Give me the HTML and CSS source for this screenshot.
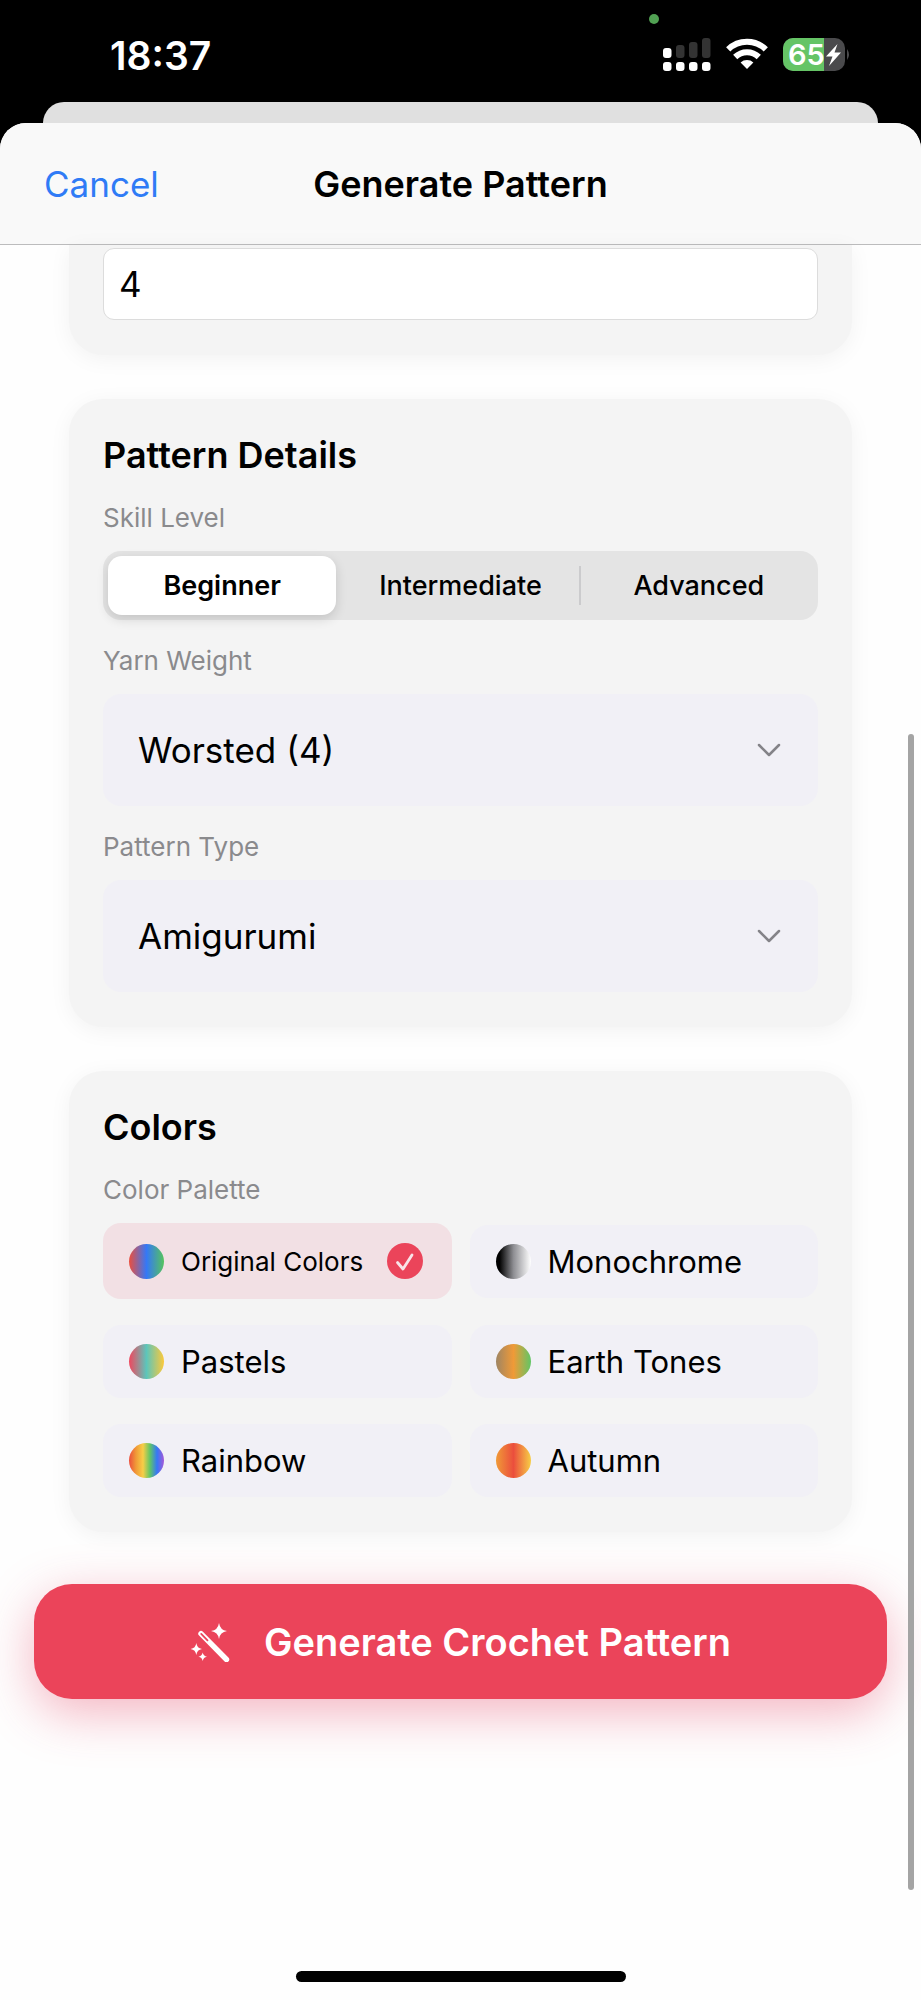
FILE: index.html
```html
<!DOCTYPE html>
<html lang="en">

<head>
    <meta charset="UTF-8" />
    <meta name="viewport" content="width=device-width, initial-scale=1.0" />
    <title>Generate Pattern</title>
    <link rel="stylesheet" href="styles.css">
</head>

<body>
    <div class="status-bar">
        <span class="camera-dot"></span>
        <span class="time">18:37</span>
        <div class="status-icons">
            <svg width="48" height="34" viewBox="0 0 48 34" fill="#fff">
                <rect x="0" y="11" width="8.5" height="10" rx="3" />
                <rect x="13" y="8" width="8.5" height="13" rx="3" fill="#333" />
                <rect x="26" y="5" width="8.5" height="16" rx="3" fill="#333" />
                <rect x="39" y="1" width="8.5" height="20" rx="3" fill="#333" />
                <rect x="0" y="25" width="8.5" height="9" rx="3" />
                <rect x="13" y="25" width="8.5" height="9" rx="3" />
                <rect x="26" y="25" width="8.5" height="9" rx="3" />
                <rect x="39" y="25" width="8.5" height="9" rx="3" />
            </svg>
            <svg width="42" height="34" viewBox="0 0 42 34" fill="none" stroke="#fff" stroke-width="6">
                <path d="M2.2 12.4 A27 27 0 0 1 39.8 12.4" />
                <path d="M9.2 20 A17 17 0 0 1 32.8 20" />
                <path d="M21 32 L14.6 25.5 A9.5 9.5 0 0 1 27.4 25.5 Z" fill="#fff" stroke="none" />
            </svg>
            <svg width="68" height="34" viewBox="0 0 68 34">
                <clipPath id="battery"><rect x="0" y="1" width="62" height="33" rx="10" /></clipPath>
                <g clip-path="url(#battery)">
                    <rect x="0" y="1" width="62" height="33" fill="#4a4a4c" />
                    <rect x="0" y="1" width="41" height="33" fill="#65c466" />
                </g>
                <path d="M64 12 Q68 17.5 64 23 Z" fill="#4a4a4c" />
                <text class="battery-level" x="5" y="28">65</text>
                <path d="M54.5 7 L43 19.5 H49.500 L46 29 L58 15.500 H51.500 Z" fill="#fff" />
            </svg>
        </div>
    </div>

    <div class="back-sheet"></div>

    <div class="sheet">
        <header class="nav">
            <button type="button" class="cancel">Cancel</button>
            <h1>Generate Pattern</h1>
        </header>

        <form class="content">
            <section class="card card-cut">
                <input type="text" class="field" aria-label="Value" value="4">
            </section>

            <section class="card">
                <h2>Pattern Details</h2>

                <p class="label" id="skill-label">Skill Level</p>
                <div class="segmented" role="radiogroup" aria-labelledby="skill-label">
                    <label class="segment"><input type="radio" name="skill" checked><span>Beginner</span></label>
                    <label class="segment"><input type="radio" name="skill"><span>Intermediate</span></label>
                    <label class="segment divided"><input type="radio" name="skill"><span>Advanced</span></label>
                </div>

                <label class="label" for="yarn">Yarn Weight</label>
                <div class="picker">
                    <select id="yarn">
                        <option>Worsted (4)</option>
                    </select>
                    <svg class="chevron" width="24" height="14" viewBox="0 0 24 14">
                        <path d="M2 2 L12 12 L22 2" />
                    </svg>
                </div>

                <label class="label" for="type">Pattern Type</label>
                <div class="picker">
                    <select id="type">
                        <option>Amigurumi</option>
                    </select>
                    <svg class="chevron" width="24" height="14" viewBox="0 0 24 14">
                        <path d="M2 2 L12 12 L22 2" />
                    </svg>
                </div>
            </section>

            <section class="card">
                <h2>Colors</h2>

                <p class="label" id="palette-label">Color Palette</p>
                <div class="palettes" role="radiogroup" aria-labelledby="palette-label">
                    <label class="palette selected">
                        <input type="radio" name="palette" checked>
                        <span class="swatch original"></span>
                        <span class="palette-name">Original Colors</span>
                        <svg class="check" width="36" height="36" viewBox="0 0 36 36">
                            <circle cx="18" cy="18" r="18" fill="#eb445a" />
                            <path d="M10.5 19.5 L16 26 L25 12" fill="none" stroke="#f9e4e8" stroke-width="2.8"
                                stroke-linecap="round" stroke-linejoin="round" />
                        </svg>
                    </label>
                    <label class="palette">
                        <input type="radio" name="palette">
                        <span class="swatch monochrome"></span>
                        <span class="palette-name">Monochrome</span>
                    </label>
                    <label class="palette">
                        <input type="radio" name="palette">
                        <span class="swatch pastels"></span>
                        <span class="palette-name">Pastels</span>
                    </label>
                    <label class="palette">
                        <input type="radio" name="palette">
                        <span class="swatch earth"></span>
                        <span class="palette-name">Earth Tones</span>
                    </label>
                    <label class="palette">
                        <input type="radio" name="palette">
                        <span class="swatch rainbow"></span>
                        <span class="palette-name">Rainbow</span>
                    </label>
                    <label class="palette">
                        <input type="radio" name="palette">
                        <span class="swatch autumn"></span>
                        <span class="palette-name">Autumn</span>
                    </label>
                </div>
            </section>

            <button type="button" class="generate">
                <svg width="40" height="40" viewBox="0 0 40 40" fill="#fff">
                    <path d="M29 1 Q30 8 37 9 Q30 10 29 17 Q28 10 21 9 Q28 8 29 1 Z" />
                    <path d="M6.3 21 Q7 26.3 12 27 Q7 27.7 6.3 33 Q5.6 27.7 .6 27 Q5.6 26.3 6.3 21 Z" />
                    <path d="M12.7 30.5 Q13.3 34.1 17 34.7 Q13.3 35.3 12.7 39 Q12.1 35.3 8.4 34.7 Q12.1 34.1 12.7 30.5 Z" />
                    <path d="M11 11.7 L36.5 37.5" stroke="#fff" stroke-width="5.4" stroke-linecap="round" />
                    <path d="M11.2 11.9 L17.5 18.3" stroke="#eb445a" stroke-width="1.8" stroke-linecap="round" />
                </svg>
                Generate Crochet Pattern
            </button>
        </form>

        <div class="home-indicator"></div>
    </div>

    <div class="scrollbar"></div>
</body>

</html>
```

FILE: styles.css
```css
* {
    box-sizing: border-box;
}

body {
    margin: 0;
    min-height: 100vh;
    display: flex;
    flex-direction: column;
    background-color: #000;
    color: #000;
    font-family: Inter, "Liberation Sans", sans-serif;
}

button,
input,
select {
    font: inherit;
    color: inherit;
    margin: 0;
}

h1,
h2,
p {
    margin: 0;
}

svg {
    display: block;
    flex: none;
}

/* status bar */

.status-bar {
    position: relative;
    height: 102px;
    padding: 10px 70px 0 110px;
    display: flex;
    justify-content: space-between;
    align-items: center;
}

.camera-dot {
    position: absolute;
    top: 14px;
    right: 262px;
    width: 10px;
    height: 10px;
    border-radius: 50%;
    background-color: #51a153;
}

.time {
    padding-bottom: 2px;
    color: #fff;
    font-size: 39px;
    font-weight: 600;
}

.status-icons {
    display: flex;
    gap: 15px;
    padding-bottom: 4px;
}

.battery-level {
    font-size: 29px;
    font-weight: 600;
    fill: #fff;
}

/* sheets */

.back-sheet {
    height: 21px;
    margin: 0 43px;
    background-color: #e0e0e0;
    border-radius: 22px 22px 0 0;
}

.sheet {
    flex: 1;
    display: flex;
    flex-direction: column;
    background-color: #fefefe;
    border-radius: 26px 26px 0 0;
    overflow: hidden;
}

.nav {
    height: 122px;
    padding: 0 44px;
    display: grid;
    grid-template-columns: 1fr auto 1fr;
    align-items: center;
    background-color: #f9f9f9;
    border-bottom: 1px solid #bcbcbd;
}

.cancel {
    justify-self: start;
    padding: 0;
    border: 0;
    background: none;
    color: #2f7bf6;
    font-size: 35px;
}

h1 {
    font-size: 36px;
    font-weight: 600;
}

.content {
    display: flex;
    flex-direction: column;
    gap: 44px;
    padding: 0 34px;
}

.card {
    margin: 0 35px;
    padding: 34px 34px 35px;
    display: flex;
    flex-direction: column;
    background-color: #f4f4f4;
    border-radius: 34px;
    box-shadow: 0 4px 22px rgba(0, 0, 0, 0.05);
}

/* first card is scrolled under the navigation bar */
.card-cut {
    padding-top: 3px;
    border-radius: 0 0 34px 34px;
}

h2 {
    font-size: 36px;
    line-height: 44px;
    font-weight: 600;
}

.label {
    margin: 24px 0 16px;
    color: #8a8a8d;
    font-size: 26px;
    line-height: 34px;
}

.field {
    width: 100%;
    height: 72px;
    padding: 0 15px;
    border: 1px solid #dcdcdc;
    border-radius: 11px;
    background-color: #fff;
    font-size: 35px;
}

.segmented {
    height: 69px;
    padding: 5px;
    display: grid;
    grid-template-columns: repeat(3, 1fr);
    gap: 10px;
    background-color: #e4e4e4;
    border-radius: 18px;
}

.segment {
    position: relative;
    display: flex;
    font-size: 27px;
    font-weight: 500;
}

.segment input,
.palette input {
    position: absolute;
    opacity: 0;
}

.segment span {
    flex: 1;
    display: flex;
    justify-content: center;
    align-items: center;
    border-radius: 14px;
}

.segment input:checked + span {
    background-color: #fff;
    font-weight: 600;
    box-shadow: 0 4px 12px rgba(0, 0, 0, 0.14);
}

.divided::before {
    content: "";
    position: absolute;
    left: -6px;
    top: 10px;
    bottom: 10px;
    width: 2px;
    background-color: #cbcbcd;
}

.picker {
    position: relative;
}

.picker select {
    display: block;
    width: 100%;
    height: 112px;
    padding: 0 80px 0 35px;
    border: 0;
    border-radius: 18px;
    background-color: #f1f0f6;
    font-size: 35px;
    appearance: none;
}

.chevron {
    position: absolute;
    right: 37px;
    top: 49px;
    pointer-events: none;
    fill: none;
    stroke: #848388;
    stroke-width: 2.5;
    stroke-linecap: round;
    stroke-linejoin: round;
}

/* colors */

.palettes {
    display: grid;
    grid-template-columns: 1fr 1fr;
    align-items: center;
    gap: 26px 18px;
}

.palette {
    position: relative;
    height: 73px;
    padding: 0 29px 0 26px;
    display: flex;
    align-items: center;
    gap: 17px;
    background-color: #f1f0f6;
    border-radius: 18px;
    font-size: 31px;
    white-space: nowrap;
}

.palette.selected {
    height: 76px;
    background-color: #f2e0e4;
    font-size: 26px;
}

.swatch {
    flex: none;
    width: 35px;
    height: 35px;
    border-radius: 50%;
}

.original {
    background: linear-gradient(to right, #ec4e3d, #3578f6 50%, #55c45c);
}

.monochrome {
    background: linear-gradient(to right, #000 10%, #8e8e93 50%, #fff);
}

.pastels {
    background: linear-gradient(to right, #f0475e, #5cc5bb 50%, #fcc93a);
}

.earth {
    background: linear-gradient(to right, #9f8563, #f09a37 50%, #61c665);
}

.rainbow {
    background: linear-gradient(to right, #ec4e3d, #f09a37 20%, #f7ce46 40%, #61c665 60%, #3578f6 80%, #a558d8);
}

.autumn {
    background: linear-gradient(to right, #f09a37, #eb4e3d 50%, #f7ce46);
}

.check {
    margin-left: auto;
}

.generate {
    height: 115px;
    margin-top: 8px;
    padding: 0;
    display: flex;
    justify-content: center;
    align-items: center;
    gap: 34px;
    border: 0;
    border-radius: 38px;
    background-color: #eb445a;
    box-shadow: 0 14px 50px rgba(228, 60, 95, 0.38);
    color: #fff;
    font-size: 38px;
    font-weight: 600;
}

.home-indicator {
    width: 330px;
    height: 11px;
    margin: auto auto 18px;
    border-radius: 6px;
    background-color: #000;
}

.scrollbar {
    position: absolute;
    right: 7px;
    top: 734px;
    width: 6px;
    height: 1156px;
    border-radius: 3px;
    background-color: #a4a4a4;
}
```
